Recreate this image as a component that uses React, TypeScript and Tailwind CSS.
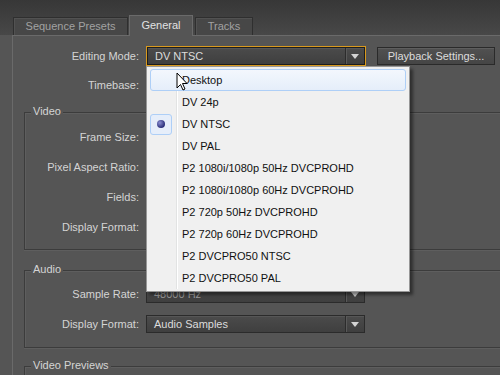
import React from "react";

const menuItems = [
  "Desktop",
  "DV 24p",
  "DV NTSC",
  "DV PAL",
  "P2 1080i/1080p 50Hz DVCPROHD",
  "P2 1080i/1080p 60Hz DVCPROHD",
  "P2 720p 50Hz DVCPROHD",
  "P2 720p 60Hz DVCPROHD",
  "P2 DVCPRO50 NTSC",
  "P2 DVCPRO50 PAL",
];

function Arrow() {
  return (
    <svg width="8" height="5" viewBox="0 0 8 5">
      <path d="M0 0 H8 L4 5 Z" fill="#d4d4d4" />
    </svg>
  );
}

function Select({ value, dim, framed }: { value?: string; dim?: boolean; framed?: boolean }) {
  return (
    <div
      className={
        "flex h-[18px] w-[219px] border bg-gradient-to-b from-[#4b4b4b] to-[#3f3f3f] shadow-[inset_0_1px_0_#565656] " +
        (framed ? "w-full h-full border-[#1d1d1d]" : "border-[#2b2b2b]")
      }
    >
      <div className={"flex-1 flex items-center pl-[7px] " + (dim ? "text-[#9c9c9c]" : "text-[#dcdcdc]")}>
        {value}
      </div>
      <div className="w-[19px] flex items-center justify-center border-l border-[#2c2c2c] shadow-[inset_1px_0_0_#5a5a5a]">
        <Arrow />
      </div>
    </div>
  );
}

function Row({ label, labelW, children }: { label: string; labelW: string; children?: React.ReactNode }) {
  return (
    <div className="flex items-center h-[18px] gap-[7px]">
      <div className={labelW + " text-right text-[#d4d4d4]"}>{label}</div>
      {children}
    </div>
  );
}

function Group({ title, className, children }: { title: string; className?: string; children?: React.ReactNode }) {
  return (
    <div
      className={
        "relative ml-[11px] mr-[-30px] border-l border-t border-b border-[#3c3c3c] shadow-[inset_1px_1px_0_#5e5e5e,0_1px_0_#5e5e5e] " +
        (className ?? "")
      }
    >
      <div className="absolute left-[6px] top-[-8px] bg-[#555] px-[2px] text-[#d4d4d4]">{title}</div>
      {children}
    </div>
  );
}

function Cursor() {
  return (
    <svg className="absolute left-[176px] top-[72px]" width="13" height="20" viewBox="0 0 13 20">
      <path d="M1 1 V16 L4.5 12.5 L7 18 L9 17 L6.5 11.5 L11 11.5 Z" fill="#fff" stroke="#000" strokeWidth="1" strokeLinejoin="round" />
    </svg>
  );
}

export default function App() {
  return (
    <div className="relative w-[500px] h-[375px] overflow-hidden flex flex-col bg-[#555] font-['Liberation_Sans',Arial,sans-serif] text-[11px] leading-[13px]">
      {/* tab strip */}
      <div className="h-[35px] shrink-0 flex items-end pl-[13px] bg-gradient-to-b from-[#373737] to-[#484848]">
        <div className="h-[18px] w-[115px] flex items-center justify-center border border-b-0 border-[#2f2f2f] bg-[#474747] text-[#a2a2a2] shadow-[inset_1px_1px_0_#525252]">
          Sequence Presets
        </div>
        <div className="relative z-10 -mb-px ml-[1px] h-[21px] w-[64px] flex items-center justify-center pb-[2px] border border-b-0 border-[#6a6a6a] bg-[#555] text-[#e2e2e2]">
          General
        </div>
        <div className="h-[18px] w-[58px] ml-[2px] flex items-center justify-center border border-b-0 border-[#2f2f2f] bg-[#474747] text-[#a2a2a2] shadow-[inset_1px_1px_0_#525252]">
          Tracks
        </div>
      </div>

      {/* panel */}
      <div className="flex-1 ml-[12px] border-l border-t border-[#6a6a6a] flex flex-col pt-[10px]">
        <div className="flex items-center h-[20px] gap-[7px]">
          <div className="w-[126px] text-right text-[#d4d4d4]">Editing Mode:</div>
          <div className="w-[220px] h-[20px] border border-[#d99a1e]">
            <Select value="DV NTSC" framed />
          </div>
          <button className="ml-[4px] h-[18px] w-[118px] border border-[#2a2a2a] bg-gradient-to-b from-[#515151] to-[#454545] shadow-[inset_0_1px_0_#5e5e5e] text-[#dcdcdc]">
            Playback Settings...
          </button>
        </div>
        <div className="mt-[10px]">
          <Row label="Timebase:" labelW="w-[126px]">
            <Select />
          </Row>
        </div>

        <Group title="Video" className="mt-[18px] pt-[15px] pb-[13px]">
          <div className="flex flex-col gap-[12px]">
            <Row label="Frame Size:" labelW="w-[114px]" />
            <Row label="Pixel Aspect Ratio:" labelW="w-[114px]" />
            <Row label="Fields:" labelW="w-[114px]" />
            <Row label="Display Format:" labelW="w-[114px]" />
          </div>
        </Group>

        <Group title="Audio" className="mt-[20px] pt-[14px] pb-[14px]">
          <div className="flex flex-col gap-[12px]">
            <Row label="Sample Rate:" labelW="w-[114px]">
              <Select value="48000 Hz" dim />
            </Row>
            <Row label="Display Format:" labelW="w-[114px]">
              <Select value="Audio Samples" />
            </Row>
          </div>
        </Group>

        <Group title="Video Previews" className="mt-[18px] h-[60px]" />
      </div>

      {/* open dropdown menu */}
      <div className="absolute left-[146px] top-[66px] w-[264px] h-[226px] border border-[#979797] bg-[#f0f0f0] shadow-[3px_3px_3px_rgba(0,0,0,0.45)] pt-[2px] px-[3px]">
        <div className="absolute left-[29px] top-[2px] bottom-[2px] w-px bg-[#e2e3e3] shadow-[1px_0_0_#fff]" />
        {menuItems.map((item, i) => (
          <div
            key={item}
            className={
              "relative h-[22px] flex items-center rounded-[3px] border " +
              (i === 0
                ? "border-[#aecff7] bg-gradient-to-b from-[#f3f7fd] to-[#e5eefa]"
                : "border-transparent")
            }
          >
            <div className="w-[30px] h-full flex items-center">
              {i === 2 && (
                <div className="ml-[-1px] w-[22px] h-[21px] rounded-[3px] border border-[#aecff7] bg-[#e6eefa] flex items-center justify-center">
                  <div className="w-[8px] h-[8px] rounded-full bg-[radial-gradient(circle_at_35%_35%,#8a8ed0,#2b2f7a_70%)]" />
                </div>
              )}
            </div>
            <span className="text-[#111] pl-px">{item}</span>
          </div>
        ))}
      </div>

      <Cursor />
    </div>
  );
}
